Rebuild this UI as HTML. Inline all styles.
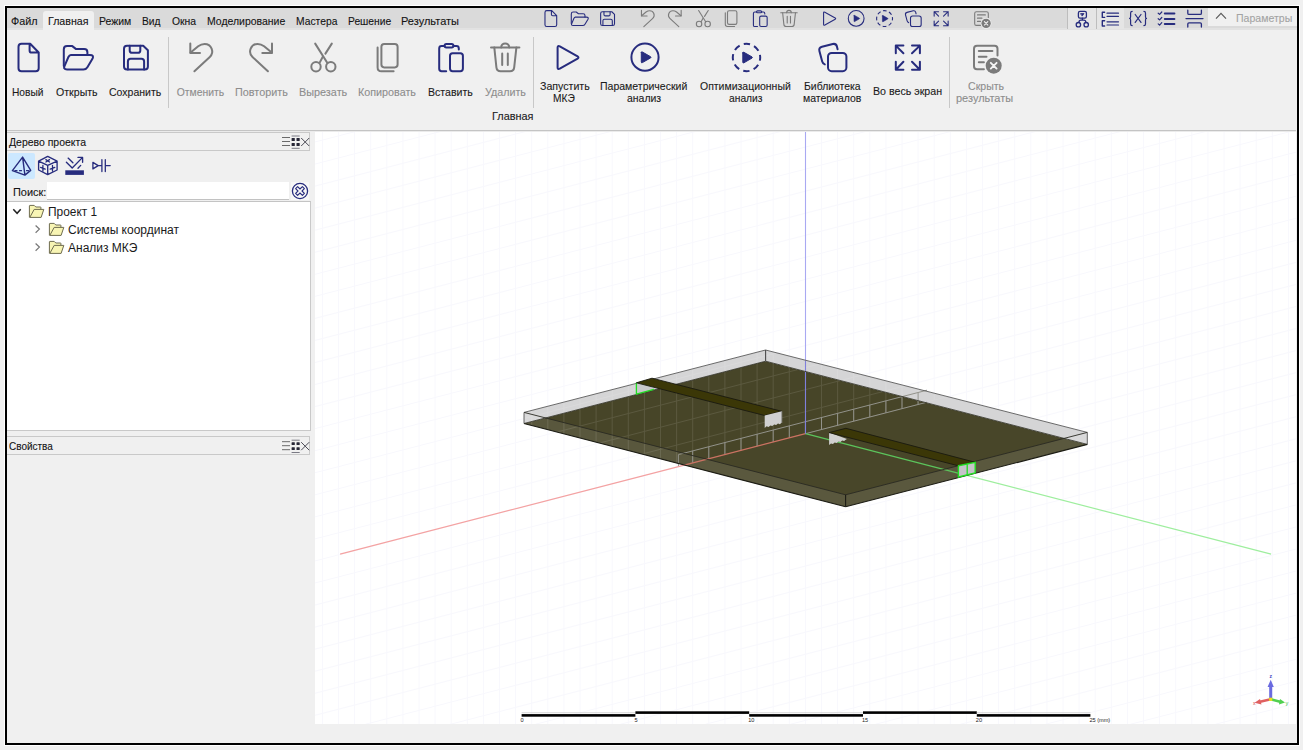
<!DOCTYPE html><html><head><meta charset="utf-8"><style>
*{margin:0;padding:0;box-sizing:border-box}
html,body{width:1303px;height:750px;overflow:hidden;background:#f0f0f0;font-family:"Liberation Sans",sans-serif}
.abs{position:absolute}
.t{position:absolute;white-space:pre;transform-origin:0 0;font-family:"Liberation Sans",sans-serif;-webkit-text-stroke:0.1px currentColor}
</style></head><body>
<div class="abs" style="left:4px;top:5px;width:1296px;height:741px;border:1px solid #fff"></div>
<div class="abs" style="left:7px;top:8px;width:1290px;height:21px;background:#dadada"></div>
<div class="abs" style="left:7px;top:28px;width:1290px;height:2px;background:#e2e2e2"></div>
<div class="abs" style="left:43px;top:11px;width:51px;height:19px;background:#f0f0f0;border-radius:3px 3px 0 0"></div>
<div class="abs" style="left:1068px;top:8px;width:56px;height:21px;background:#e5e5e5"></div>
<div class="abs" style="left:1067px;top:8px;width:1px;height:21px;background:#bdbdbd"></div>
<div class="abs" style="left:1096px;top:8px;width:1px;height:21px;background:#bdbdbd"></div>
<div class="abs" style="left:1208px;top:8px;width:89px;height:18px;background:#f0f0f0"></div>
<div class="abs" style="left:7px;top:30px;width:1290px;height:100px;background:#f0f0f0"></div>
<div class="abs" style="left:168px;top:37px;width:1px;height:71px;background:#c8c8c8"></div>
<div class="abs" style="left:533px;top:37px;width:1px;height:71px;background:#c8c8c8"></div>
<div class="abs" style="left:949px;top:37px;width:1px;height:71px;background:#c8c8c8"></div>
<div class="abs" style="left:7px;top:130px;width:1289px;height:1px;background:#c4c4c4"></div>
<div class="abs" style="left:7px;top:131px;width:1289px;height:1px;background:#ebebeb"></div>
<div class="abs" style="left:7px;top:132px;width:303px;height:19px;border:1px solid #c9c9c9;border-left:none;background:#f0f0f0"></div>
<div class="abs" style="left:8px;top:153px;width:27px;height:26px;background:#cce8ff;border-radius:2px"></div>
<div class="abs" style="left:47px;top:182px;width:242px;height:18px;background:#fff;border-bottom:1px solid #c2c2c2"></div>
<div class="abs" style="left:291px;top:182px;width:18px;height:18px;background:#f7f7f7"></div>
<div class="abs" style="left:7px;top:201px;width:304px;height:230px;background:#fff;border:1px solid #c9c9c9;border-left:none;border-top:1px solid #c4c4c4"></div>
<div class="abs" style="left:7px;top:436px;width:303px;height:19px;border:1px solid #c9c9c9;border-left:none;background:#f0f0f0"></div>
<svg class="abs" style="left:315px;top:132px" width="981" height="592" viewBox="315 132 981 592">
<rect x="315" y="132" width="981" height="592" fill="#fff"/>
<g stroke="#f8f8fd" stroke-width="1" fill="none" opacity="1"><line x1="322.40" y1="132" x2="322.40" y2="724"/><line x1="338.50" y1="132" x2="338.50" y2="724"/><line x1="354.60" y1="132" x2="354.60" y2="724"/><line x1="370.70" y1="132" x2="370.70" y2="724"/><line x1="386.80" y1="132" x2="386.80" y2="724"/><line x1="402.90" y1="132" x2="402.90" y2="724"/><line x1="419.00" y1="132" x2="419.00" y2="724"/><line x1="435.10" y1="132" x2="435.10" y2="724"/><line x1="451.20" y1="132" x2="451.20" y2="724"/><line x1="467.30" y1="132" x2="467.30" y2="724"/><line x1="483.40" y1="132" x2="483.40" y2="724"/><line x1="499.50" y1="132" x2="499.50" y2="724"/><line x1="515.60" y1="132" x2="515.60" y2="724"/><line x1="531.70" y1="132" x2="531.70" y2="724"/><line x1="547.80" y1="132" x2="547.80" y2="724"/><line x1="563.90" y1="132" x2="563.90" y2="724"/><line x1="580.00" y1="132" x2="580.00" y2="724"/><line x1="596.10" y1="132" x2="596.10" y2="724"/><line x1="612.20" y1="132" x2="612.20" y2="724"/><line x1="628.30" y1="132" x2="628.30" y2="724"/><line x1="644.40" y1="132" x2="644.40" y2="724"/><line x1="660.50" y1="132" x2="660.50" y2="724"/><line x1="676.60" y1="132" x2="676.60" y2="724"/><line x1="692.70" y1="132" x2="692.70" y2="724"/><line x1="708.80" y1="132" x2="708.80" y2="724"/><line x1="724.90" y1="132" x2="724.90" y2="724"/><line x1="741.00" y1="132" x2="741.00" y2="724"/><line x1="757.10" y1="132" x2="757.10" y2="724"/><line x1="773.20" y1="132" x2="773.20" y2="724"/><line x1="789.30" y1="132" x2="789.30" y2="724"/><line x1="805.40" y1="132" x2="805.40" y2="724"/><line x1="821.50" y1="132" x2="821.50" y2="724"/><line x1="837.60" y1="132" x2="837.60" y2="724"/><line x1="853.70" y1="132" x2="853.70" y2="724"/><line x1="869.80" y1="132" x2="869.80" y2="724"/><line x1="885.90" y1="132" x2="885.90" y2="724"/><line x1="902.00" y1="132" x2="902.00" y2="724"/><line x1="918.10" y1="132" x2="918.10" y2="724"/><line x1="934.20" y1="132" x2="934.20" y2="724"/><line x1="950.30" y1="132" x2="950.30" y2="724"/><line x1="966.40" y1="132" x2="966.40" y2="724"/><line x1="982.50" y1="132" x2="982.50" y2="724"/><line x1="998.60" y1="132" x2="998.60" y2="724"/><line x1="1014.70" y1="132" x2="1014.70" y2="724"/><line x1="1030.80" y1="132" x2="1030.80" y2="724"/><line x1="1046.90" y1="132" x2="1046.90" y2="724"/><line x1="1063.00" y1="132" x2="1063.00" y2="724"/><line x1="1079.10" y1="132" x2="1079.10" y2="724"/><line x1="1095.20" y1="132" x2="1095.20" y2="724"/><line x1="1111.30" y1="132" x2="1111.30" y2="724"/><line x1="1127.40" y1="132" x2="1127.40" y2="724"/><line x1="1143.50" y1="132" x2="1143.50" y2="724"/><line x1="1159.60" y1="132" x2="1159.60" y2="724"/><line x1="1175.70" y1="132" x2="1175.70" y2="724"/><line x1="1191.80" y1="132" x2="1191.80" y2="724"/><line x1="1207.90" y1="132" x2="1207.90" y2="724"/><line x1="1224.00" y1="132" x2="1224.00" y2="724"/><line x1="1240.10" y1="132" x2="1240.10" y2="724"/><line x1="1256.20" y1="132" x2="1256.20" y2="724"/><line x1="1272.30" y1="132" x2="1272.30" y2="724"/><line x1="1288.40" y1="132" x2="1288.40" y2="724"/><line x1="315" y1="142.00" x2="1296" y2="-112.47"/><line x1="315" y1="164.05" x2="1296" y2="-90.42"/><line x1="315" y1="186.10" x2="1296" y2="-68.37"/><line x1="315" y1="208.15" x2="1296" y2="-46.32"/><line x1="315" y1="230.20" x2="1296" y2="-24.27"/><line x1="315" y1="252.25" x2="1296" y2="-2.22"/><line x1="315" y1="274.30" x2="1296" y2="19.83"/><line x1="315" y1="296.35" x2="1296" y2="41.88"/><line x1="315" y1="318.40" x2="1296" y2="63.93"/><line x1="315" y1="340.45" x2="1296" y2="85.98"/><line x1="315" y1="362.50" x2="1296" y2="108.03"/><line x1="315" y1="384.55" x2="1296" y2="130.08"/><line x1="315" y1="406.60" x2="1296" y2="152.13"/><line x1="315" y1="428.65" x2="1296" y2="174.18"/><line x1="315" y1="450.70" x2="1296" y2="196.23"/><line x1="315" y1="472.75" x2="1296" y2="218.28"/><line x1="315" y1="494.80" x2="1296" y2="240.33"/><line x1="315" y1="516.85" x2="1296" y2="262.38"/><line x1="315" y1="538.90" x2="1296" y2="284.43"/><line x1="315" y1="560.95" x2="1296" y2="306.48"/><line x1="315" y1="583.00" x2="1296" y2="328.53"/><line x1="315" y1="605.05" x2="1296" y2="350.58"/><line x1="315" y1="627.10" x2="1296" y2="372.63"/><line x1="315" y1="649.15" x2="1296" y2="394.68"/><line x1="315" y1="671.20" x2="1296" y2="416.73"/><line x1="315" y1="693.25" x2="1296" y2="438.78"/><line x1="315" y1="715.30" x2="1296" y2="460.83"/><line x1="315" y1="737.35" x2="1296" y2="482.88"/><line x1="315" y1="759.40" x2="1296" y2="504.93"/><line x1="315" y1="781.45" x2="1296" y2="526.98"/><line x1="315" y1="803.50" x2="1296" y2="549.03"/><line x1="315" y1="825.55" x2="1296" y2="571.08"/><line x1="315" y1="847.60" x2="1296" y2="593.13"/><line x1="315" y1="869.65" x2="1296" y2="615.18"/><line x1="315" y1="891.70" x2="1296" y2="637.23"/><line x1="315" y1="913.75" x2="1296" y2="659.28"/><line x1="315" y1="935.80" x2="1296" y2="681.33"/><line x1="315" y1="957.85" x2="1296" y2="703.38"/></g>
<polygon points="524.0,423.5 765.6,361.2 1087.3,444.4 845.6,506.8" fill="#484629"/>
<polygon points="524.0,412.4 765.6,350.0 765.6,361.2 524.0,423.5" fill="#d5d5d6"/>
<polygon points="765.6,350.0 1087.3,432.4 1087.3,444.4 765.6,361.2" fill="#d5d5d6"/>
<defs><clipPath id="bk"><polygon points="315.0,560.7 1296.0,306.7 1296.0,132.0 315.0,132.0"/></clipPath></defs>
<defs><clipPath id="brd"><polygon points="524.0,412.4 765.6,350.0 1087.3,432.4 1087.3,444.4 845.6,506.8 524.0,423.5"/></clipPath></defs>
<g clip-path="url(#brd)"><g clip-path="url(#bk)"><g stroke="#ffffff" stroke-width="1" fill="none" opacity="0.1"><line x1="322.40" y1="132" x2="322.40" y2="724"/><line x1="338.50" y1="132" x2="338.50" y2="724"/><line x1="354.60" y1="132" x2="354.60" y2="724"/><line x1="370.70" y1="132" x2="370.70" y2="724"/><line x1="386.80" y1="132" x2="386.80" y2="724"/><line x1="402.90" y1="132" x2="402.90" y2="724"/><line x1="419.00" y1="132" x2="419.00" y2="724"/><line x1="435.10" y1="132" x2="435.10" y2="724"/><line x1="451.20" y1="132" x2="451.20" y2="724"/><line x1="467.30" y1="132" x2="467.30" y2="724"/><line x1="483.40" y1="132" x2="483.40" y2="724"/><line x1="499.50" y1="132" x2="499.50" y2="724"/><line x1="515.60" y1="132" x2="515.60" y2="724"/><line x1="531.70" y1="132" x2="531.70" y2="724"/><line x1="547.80" y1="132" x2="547.80" y2="724"/><line x1="563.90" y1="132" x2="563.90" y2="724"/><line x1="580.00" y1="132" x2="580.00" y2="724"/><line x1="596.10" y1="132" x2="596.10" y2="724"/><line x1="612.20" y1="132" x2="612.20" y2="724"/><line x1="628.30" y1="132" x2="628.30" y2="724"/><line x1="644.40" y1="132" x2="644.40" y2="724"/><line x1="660.50" y1="132" x2="660.50" y2="724"/><line x1="676.60" y1="132" x2="676.60" y2="724"/><line x1="692.70" y1="132" x2="692.70" y2="724"/><line x1="708.80" y1="132" x2="708.80" y2="724"/><line x1="724.90" y1="132" x2="724.90" y2="724"/><line x1="741.00" y1="132" x2="741.00" y2="724"/><line x1="757.10" y1="132" x2="757.10" y2="724"/><line x1="773.20" y1="132" x2="773.20" y2="724"/><line x1="789.30" y1="132" x2="789.30" y2="724"/><line x1="805.40" y1="132" x2="805.40" y2="724"/><line x1="821.50" y1="132" x2="821.50" y2="724"/><line x1="837.60" y1="132" x2="837.60" y2="724"/><line x1="853.70" y1="132" x2="853.70" y2="724"/><line x1="869.80" y1="132" x2="869.80" y2="724"/><line x1="885.90" y1="132" x2="885.90" y2="724"/><line x1="902.00" y1="132" x2="902.00" y2="724"/><line x1="918.10" y1="132" x2="918.10" y2="724"/><line x1="934.20" y1="132" x2="934.20" y2="724"/><line x1="950.30" y1="132" x2="950.30" y2="724"/><line x1="966.40" y1="132" x2="966.40" y2="724"/><line x1="982.50" y1="132" x2="982.50" y2="724"/><line x1="998.60" y1="132" x2="998.60" y2="724"/><line x1="1014.70" y1="132" x2="1014.70" y2="724"/><line x1="1030.80" y1="132" x2="1030.80" y2="724"/><line x1="1046.90" y1="132" x2="1046.90" y2="724"/><line x1="1063.00" y1="132" x2="1063.00" y2="724"/><line x1="1079.10" y1="132" x2="1079.10" y2="724"/><line x1="1095.20" y1="132" x2="1095.20" y2="724"/><line x1="1111.30" y1="132" x2="1111.30" y2="724"/><line x1="1127.40" y1="132" x2="1127.40" y2="724"/><line x1="1143.50" y1="132" x2="1143.50" y2="724"/><line x1="1159.60" y1="132" x2="1159.60" y2="724"/><line x1="1175.70" y1="132" x2="1175.70" y2="724"/><line x1="1191.80" y1="132" x2="1191.80" y2="724"/><line x1="1207.90" y1="132" x2="1207.90" y2="724"/><line x1="1224.00" y1="132" x2="1224.00" y2="724"/><line x1="1240.10" y1="132" x2="1240.10" y2="724"/><line x1="1256.20" y1="132" x2="1256.20" y2="724"/><line x1="1272.30" y1="132" x2="1272.30" y2="724"/><line x1="1288.40" y1="132" x2="1288.40" y2="724"/><line x1="315" y1="142.00" x2="1296" y2="-112.47"/><line x1="315" y1="164.05" x2="1296" y2="-90.42"/><line x1="315" y1="186.10" x2="1296" y2="-68.37"/><line x1="315" y1="208.15" x2="1296" y2="-46.32"/><line x1="315" y1="230.20" x2="1296" y2="-24.27"/><line x1="315" y1="252.25" x2="1296" y2="-2.22"/><line x1="315" y1="274.30" x2="1296" y2="19.83"/><line x1="315" y1="296.35" x2="1296" y2="41.88"/><line x1="315" y1="318.40" x2="1296" y2="63.93"/><line x1="315" y1="340.45" x2="1296" y2="85.98"/><line x1="315" y1="362.50" x2="1296" y2="108.03"/><line x1="315" y1="384.55" x2="1296" y2="130.08"/><line x1="315" y1="406.60" x2="1296" y2="152.13"/><line x1="315" y1="428.65" x2="1296" y2="174.18"/><line x1="315" y1="450.70" x2="1296" y2="196.23"/><line x1="315" y1="472.75" x2="1296" y2="218.28"/><line x1="315" y1="494.80" x2="1296" y2="240.33"/><line x1="315" y1="516.85" x2="1296" y2="262.38"/><line x1="315" y1="538.90" x2="1296" y2="284.43"/><line x1="315" y1="560.95" x2="1296" y2="306.48"/><line x1="315" y1="583.00" x2="1296" y2="328.53"/><line x1="315" y1="605.05" x2="1296" y2="350.58"/><line x1="315" y1="627.10" x2="1296" y2="372.63"/><line x1="315" y1="649.15" x2="1296" y2="394.68"/><line x1="315" y1="671.20" x2="1296" y2="416.73"/><line x1="315" y1="693.25" x2="1296" y2="438.78"/><line x1="315" y1="715.30" x2="1296" y2="460.83"/><line x1="315" y1="737.35" x2="1296" y2="482.88"/><line x1="315" y1="759.40" x2="1296" y2="504.93"/><line x1="315" y1="781.45" x2="1296" y2="526.98"/><line x1="315" y1="803.50" x2="1296" y2="549.03"/><line x1="315" y1="825.55" x2="1296" y2="571.08"/><line x1="315" y1="847.60" x2="1296" y2="593.13"/><line x1="315" y1="869.65" x2="1296" y2="615.18"/><line x1="315" y1="891.70" x2="1296" y2="637.23"/><line x1="315" y1="913.75" x2="1296" y2="659.28"/><line x1="315" y1="935.80" x2="1296" y2="681.33"/><line x1="315" y1="957.85" x2="1296" y2="703.38"/></g></g></g>
<polygon points="524.0,412.4 845.6,494.8 845.6,506.8 524.0,423.5" fill="#ffffff" fill-opacity="0.1"/>
<polygon points="845.6,494.8 1087.3,432.4 1087.3,444.4 845.6,506.8" fill="#ffffff" fill-opacity="0.1"/>
<g stroke="#92928a" stroke-width="1" fill="none"><line x1="678.4" y1="454.6" x2="927" y2="390.2"/><line x1="692.7" y1="450.9" x2="692.7" y2="462.9"/><line x1="708.8" y1="446.7" x2="708.8" y2="458.7"/><line x1="724.9" y1="442.6" x2="724.9" y2="454.6"/><line x1="741.0" y1="438.4" x2="741.0" y2="450.4"/><line x1="757.1" y1="434.2" x2="757.1" y2="446.2"/><line x1="773.2" y1="430.1" x2="773.2" y2="442.1"/><line x1="789.3" y1="425.9" x2="789.3" y2="437.9"/><line x1="805.4" y1="421.7" x2="805.4" y2="433.7"/><line x1="821.5" y1="417.6" x2="821.5" y2="429.6"/><line x1="837.6" y1="413.4" x2="837.6" y2="425.4"/><line x1="853.7" y1="409.2" x2="853.7" y2="421.2"/><line x1="869.8" y1="405.1" x2="869.8" y2="417.1"/><line x1="885.9" y1="400.9" x2="885.9" y2="412.9"/><line x1="902.0" y1="396.7" x2="902.0" y2="408.7"/><line x1="918.1" y1="392.5" x2="918.1" y2="404.5"/><line x1="678.4" y1="454.6" x2="678.4" y2="466.6"/><line x1="805.5" y1="433.7" x2="927" y2="402.2"/></g>
<line x1="805.5" y1="433.7" x2="684.3" y2="465.08" stroke="#cc7262" stroke-width="1.2"/>
<line x1="684.3" y1="465.08" x2="340.1" y2="554.2" stroke="#f4a2a2" stroke-width="1.2"/>
<line x1="805.5" y1="433.7" x2="966.7" y2="475.43" stroke="#5cc45c" stroke-width="1.2"/>
<line x1="966.7" y1="475.43" x2="1271.1" y2="554.2" stroke="#9eee9e" stroke-width="1.2"/>
<line x1="805.5" y1="132" x2="805.5" y2="360.5" stroke="#a9a9f2" stroke-width="1.1"/>
<line x1="805.5" y1="360.5" x2="805.5" y2="433.7" stroke="#7f7fdc" stroke-width="1.1"/>
<line x1="524" y1="412.4" x2="765.6" y2="350" stroke="#5a5a5a" stroke-width="0.9"/><line x1="765.6" y1="350" x2="1087.3" y2="432.4" stroke="#5a5a5a" stroke-width="0.9"/><line x1="524" y1="423.5" x2="765.6" y2="361.2" stroke="#3a3a30" stroke-width="0.9"/><line x1="765.6" y1="361.2" x2="1087.3" y2="444.4" stroke="#3a3a30" stroke-width="0.9"/><line x1="524" y1="412.4" x2="845.6" y2="494.8" stroke="#2a2a22" stroke-width="0.9"/><line x1="845.6" y1="494.8" x2="1087.3" y2="432.4" stroke="#2a2a22" stroke-width="0.9"/><line x1="524" y1="423.5" x2="845.6" y2="506.8" stroke="#1c1c14" stroke-width="1.1"/><line x1="845.6" y1="506.8" x2="1087.3" y2="444.4" stroke="#1c1c14" stroke-width="1.1"/>
<line x1="524" y1="412.4" x2="524" y2="423.5" stroke="#555" stroke-width="0.9"/><line x1="1087.3" y1="432.4" x2="1087.3" y2="444.4" stroke="#555" stroke-width="0.9"/><line x1="845.6" y1="494.8" x2="845.6" y2="506.8" stroke="#1c1c14" stroke-width="1.1"/><line x1="765.6" y1="350" x2="765.6" y2="361.2" stroke="#4a4a4a" stroke-width="1.1"/>
<polygon points="636.4,382.8 652.0,378.2 653.9,389.6 636.4,394.2" fill="#c9c9cb" stroke="none"/>
<polyline points="636.4,382.8 636.4,394.2 653.9,389.4" fill="none" stroke="#22dd22" stroke-width="1.3"/>
<polygon points="636.4,382.8 652.0,378.2 781.8,411.3 764.7,415.5" fill="#3b3707" stroke="#1a1a10" stroke-width="0.9"/>
<polygon points="764.7,415.5 781.8,411.3 781.8,422.6 779.9,424.2 778.0,423.5 776.1,425.1 774.2,424.5 772.3,426.0 770.4,425.4 768.5,427.0 766.6,426.3 764.7,427.9" fill="#d0d0d0" stroke="none"/>
<line x1="781.8" y1="411.3" x2="781.8" y2="423" stroke="#8a8a8a" stroke-width="0.8"/>
<polygon points="829.1,432.6 847.0,439.0 846.0,439.5 844.1,441.1 842.2,440.5 840.4,442.1 838.5,441.5 836.6,443.1 834.7,442.5 832.9,444.1 831.0,443.5 829.1,445.1" fill="#d0d0d0" stroke="none"/>
<polygon points="829.1,432.6 845.9,428.3 975.2,462.3 958.4,465.8" fill="#3b3707" stroke="#1a1a10" stroke-width="0.9"/>
<polygon points="958.4,465.8 975.2,462.3 975.2,473.0 958.4,477.0" fill="#c6c3ca" stroke="#22dd22" stroke-width="1.4"/>
<line x1="967.2" y1="464.2" x2="967.2" y2="475" stroke="#22dd22" stroke-width="1.3"/>
<rect x="521.6" y="714.1" width="113.79999999999995" height="2.6" fill="#000"/>
<rect x="521.6" y="712.4" width="113.79999999999995" height="0.8" fill="#ccc"/>
<rect x="635.4" y="711.3000000000001" width="113.80000000000007" height="2.6" fill="#000"/>
<rect x="749.2" y="714.1" width="113.79999999999995" height="2.6" fill="#000"/>
<rect x="749.2" y="712.4" width="113.79999999999995" height="0.8" fill="#ccc"/>
<rect x="863.0" y="711.3000000000001" width="113.79999999999995" height="2.6" fill="#000"/>
<rect x="976.8" y="714.1" width="113.60000000000014" height="2.6" fill="#000"/>
<rect x="976.8" y="712.4" width="113.60000000000014" height="0.8" fill="#ccc"/>
<text x="520.6" y="722" font-family="Liberation Sans" font-size="5.6" fill="#222">0</text>
<text x="634.4" y="722" font-family="Liberation Sans" font-size="5.6" fill="#222">5</text>
<text x="748.2" y="722" font-family="Liberation Sans" font-size="5.6" fill="#222">10</text>
<text x="862.0" y="722" font-family="Liberation Sans" font-size="5.6" fill="#222">15</text>
<text x="975.8" y="722" font-family="Liberation Sans" font-size="5.6" fill="#222">20</text>
<text x="1089.4" y="722" font-family="Liberation Sans" font-size="5.6" fill="#222">25 (mm)</text>
<line x1="1270.7" y1="699.3" x2="1270.7" y2="686" stroke="#6a6ae0" stroke-width="3"/>
<polygon points="1267.6,687.0 1273.8,687.0 1270.7,679.8" fill="#6a6ae0"/>
<line x1="1270.7" y1="699.3" x2="1259" y2="702" stroke="#e06060" stroke-width="2.6"/>
<polygon points="1260.0,699.0 1261.5,704.5 1254.6,702.8" fill="#e06060"/>
<line x1="1270.7" y1="699.3" x2="1281" y2="702" stroke="#50d050" stroke-width="2.6"/>
<polygon points="1280.0,699.0 1279.0,704.5 1285.0,702.6" fill="#50d050"/>
<rect x="1269.1000000000001" y="697.6999999999999" width="3.2" height="3.2" fill="#e8e020"/>
<text x="1269.6" y="678.4" font-family="Liberation Sans" font-size="5" font-weight="bold" fill="#4040c0">z</text>
<text x="1285.6" y="704.8" font-family="Liberation Sans" font-size="5.5" fill="#40c040">y</text>
<text x="1253" y="704.5" font-family="Liberation Sans" font-size="5" fill="#d04040">x</text>
</svg>
<div class="abs" style="left:5px;top:6px;width:1294px;height:739px;border:2px solid #000"></div>
<svg class="abs" style="left:0;top:0" width="1303" height="750" viewBox="0 0 1303 750">
<g fill="none" stroke="#272c7e" stroke-width="2" stroke-linecap="round" stroke-linejoin="round"><path d="M29.6 43.8H21.5Q18.5 43.8 18.5 46.8V68.2Q18.5 71.2 21.5 71.2H35.7Q38.7 71.2 38.7 68.2V52.5L30.2 43.8M29.6 43.8V50.4Q29.6 52.6 31.8 52.6H38.7"/></g>
<g fill="none" stroke="#272c7e" stroke-width="2" stroke-linecap="round" stroke-linejoin="round"><path d="M63.8 66V49.4Q63.8 46.1 67.1 46.1H72.3L76.1 49.1H84.2Q87.4 49.1 87.4 52.3V54.9"/><path d="M70.8 54.9H90Q94.2 54.9 92.6 58.6L87.4 67.2Q86.2 69.4 83.4 69.4H67Q63 69.4 64.6 65.8L68.4 57Q69.4 54.9 70.8 54.9Z"/></g>
<g fill="none" stroke="#272c7e" stroke-width="2" stroke-linecap="round" stroke-linejoin="round"><path d="M127 45.7H143.2L147.9 50.2V66.4Q147.9 69.4 144.9 69.4H127Q124 69.4 124 66.4V48.7Q124 45.7 127 45.7Z"/><path d="M129.7 45.7V50.4Q129.7 52.8 132.1 52.8H137.9Q140.3 52.8 140.3 50.4V45.7"/><path d="M127.9 69.4V61.4Q127.9 58.7 130.6 58.7H141.4Q144.1 58.7 144.1 61.4V69.4"/></g>
<g fill="none" stroke="#7b7b7b" stroke-width="2" stroke-linecap="round" stroke-linejoin="round"><path d="M190.3 43.4V52.9H200"/><path d="M190.6 52.6L198.2 46.2Q201.2 43.9 204.6 43.9A7.6 7.6 0 0 1 209.8 57L194.4 71.3"/></g>
<g fill="none" stroke="#7b7b7b" stroke-width="2" stroke-linecap="round" stroke-linejoin="round"><g transform="translate(462.3,0) scale(-1,1)"><path d="M190.3 43.4V52.9H200"/><path d="M190.6 52.6L198.2 46.2Q201.2 43.9 204.6 43.9A7.6 7.6 0 0 1 209.8 57L194.4 71.3"/></g></g>
<g fill="none" stroke="#7b7b7b" stroke-width="2" stroke-linecap="round" stroke-linejoin="round"><path d="M315.2 43.6L327.4 63"/><path d="M331.8 43.6L325.4 53.6M322.8 56.8L319.8 62.4"/><circle cx="316" cy="66.8" r="4.7"/><circle cx="330.8" cy="66.8" r="4.7"/></g>
<g fill="none" stroke="#7b7b7b" stroke-width="2" stroke-linecap="round" stroke-linejoin="round"><rect x="381.4" y="44" width="16.2" height="23.4" rx="2.8"/><path d="M377.6 47.6V67.4Q377.6 71.2 381.4 71.2H393.6"/></g>
<g fill="none" stroke="#272c7e" stroke-width="2" stroke-linecap="round" stroke-linejoin="round"><path d="M444.4 46.1H441.6Q439.2 46.1 439.2 48.5V68.8Q439.2 71.2 441.6 71.2H446.2"/><path d="M453.5 46.1H456.4Q458.8 46.1 458.8 48.5V49.6"/><rect x="444.6" y="44.1" width="8.8" height="3.4" rx="1.7"/><rect x="450" y="53.2" width="12.9" height="18" rx="2.6"/></g>
<g fill="none" stroke="#7b7b7b" stroke-width="2" stroke-linecap="round" stroke-linejoin="round"><path d="M491 47.4H519.4"/><path d="M501.2 47.4A4 4 0 0 1 509.2 47.4"/><path d="M494.3 47.4L496.4 67.4Q496.8 71.2 500.6 71.2H510Q513.8 71.2 514.2 67.4L516.4 47.4"/><path d="M502.2 53.5V65.1M507.8 53.5V65.1"/></g>
<g fill="none" stroke="#272c7e" stroke-width="2" stroke-linecap="round" stroke-linejoin="round"><path d="M557.6 47.6V67.4Q557.6 69.8 559.8 68.7L577.6 58.6Q579.3 57.5 577.6 56.4L559.8 46.4Q557.6 45.2 557.6 47.6Z"/></g>
<g fill="none" stroke="#272c7e" stroke-width="2" stroke-linecap="round" stroke-linejoin="round"><circle cx="645" cy="57.2" r="13.6"/><path d="M641.3 52.5V62Q641.3 63.2 642.4 62.6L650.6 57.9Q651.4 57.3 650.6 56.7L642.4 52Q641.3 51.3 641.3 52.5Z" fill="#272c7e" stroke-width="1"/></g>
<g fill="none" stroke="#272c7e" stroke-width="2" stroke-linecap="round" stroke-linejoin="round"><circle cx="746.5" cy="57.5" r="13.7" stroke-dasharray="6.4 4.36" stroke-dashoffset="-18.3" stroke-linecap="butt" transform="rotate(0 746.5 57.5)"/><path d="M742.8 52.9V62.2Q742.8 63.4 743.9 62.8L752 58.1Q752.8 57.5 752 56.9L743.9 52.3Q742.8 51.7 742.8 52.9Z" fill="#272c7e" stroke-width="1"/></g>
<g fill="none" stroke="#272c7e" stroke-width="2" stroke-linecap="round" stroke-linejoin="round"><rect x="828" y="52.9" width="18.4" height="18.3" rx="3.6"/><path d="M837.6 49.2L836.9 46.4Q836 43.3 832.8 44L822 46.8Q818.6 47.7 819.4 51L822.2 61.6Q822.8 63.8 824.8 64.4"/></g>
<g fill="none" stroke="#272c7e" stroke-width="2" stroke-linecap="round" stroke-linejoin="round"><path d="M903.4 45.6H895.8V53.2M895.8 45.6L903.4 53.2"/><path d="M912 45.6H919.9V53.2M919.9 45.6L912 53.2"/><path d="M895.8 61.8V69.7H903.4M895.8 69.7L903.4 61.8"/><path d="M919.9 61.8V69.7H912M919.9 69.7L912 61.8"/></g>
<g fill="none" stroke="#7b7b7b" stroke-width="2" stroke-linecap="round" stroke-linejoin="round"><path d="M997.5 55.6V48.7Q997.5 45.7 994.5 45.7H977Q974 45.7 974 48.7V66.2Q974 69.2 977 69.2H983.9"/><path d="M978.8 51.1H992.4M978.8 56.7H986.5M978.8 62.3H983.9"/><circle cx="993.7" cy="65.7" r="9.2" fill="#f0f0f0" stroke="none"/><circle cx="993.7" cy="65.7" r="8" fill="#7b7b7b" stroke="none"/><path d="M990.8 62.8L996.6 68.6M996.6 62.8L990.8 68.6" stroke="#f4f4f4" stroke-width="1.9"/></g>
<g transform="translate(534.25,-14.75) scale(0.58)" fill="none" stroke="#272c7e" stroke-width="1.9" stroke-linecap="round" stroke-linejoin="round"><path d="M29.6 43.8H21.5Q18.5 43.8 18.5 46.8V68.2Q18.5 71.2 21.5 71.2H35.7Q38.7 71.2 38.7 68.2V52.5L30.2 43.8M29.6 43.8V50.4Q29.6 52.6 31.8 52.6H38.7"/></g>
<g transform="translate(534.29,-14.75) scale(0.58)" fill="none" stroke="#272c7e" stroke-width="1.9" stroke-linecap="round" stroke-linejoin="round"><path d="M63.8 66V49.4Q63.8 46.1 67.1 46.1H72.3L76.1 49.1H84.2Q87.4 49.1 87.4 52.3V54.9"/><path d="M70.8 54.9H90Q94.2 54.9 92.6 58.6L87.4 67.2Q86.2 69.4 83.4 69.4H67Q63 69.4 64.6 65.8L68.4 57Q69.4 54.9 70.8 54.9Z"/></g>
<g transform="translate(528.73,-14.75) scale(0.58)" fill="none" stroke="#272c7e" stroke-width="1.9" stroke-linecap="round" stroke-linejoin="round"><path d="M127 45.7H143.2L147.9 50.2V66.4Q147.9 69.4 144.9 69.4H127Q124 69.4 124 66.4V48.7Q124 45.7 127 45.7Z"/><path d="M129.7 45.7V50.4Q129.7 52.8 132.1 52.8H137.9Q140.3 52.8 140.3 50.4V45.7"/><path d="M127.9 69.4V61.4Q127.9 58.7 130.6 58.7H141.4Q144.1 58.7 144.1 61.4V69.4"/></g>
<g transform="translate(531.08,-14.75) scale(0.58)" fill="none" stroke="#7b7b7b" stroke-width="1.9" stroke-linecap="round" stroke-linejoin="round"><path d="M190.3 43.4V52.9H200"/><path d="M190.6 52.6L198.2 46.2Q201.2 43.9 204.6 43.9A7.6 7.6 0 0 1 209.8 57L194.4 71.3"/></g>
<g transform="translate(523.41,-14.75) scale(0.58)" fill="none" stroke="#7b7b7b" stroke-width="1.9" stroke-linecap="round" stroke-linejoin="round"><g transform="translate(462.3,0) scale(-1,1)"><path d="M190.3 43.4V52.9H200"/><path d="M190.6 52.6L198.2 46.2Q201.2 43.9 204.6 43.9A7.6 7.6 0 0 1 209.8 57L194.4 71.3"/></g></g>
<g transform="translate(515.79,-14.75) scale(0.58)" fill="none" stroke="#7b7b7b" stroke-width="1.9" stroke-linecap="round" stroke-linejoin="round"><path d="M315.2 43.6L327.4 63"/><path d="M331.8 43.6L325.4 53.6M322.8 56.8L319.8 62.4"/><circle cx="316" cy="66.8" r="4.7"/><circle cx="330.8" cy="66.8" r="4.7"/></g>
<g transform="translate(506.29,-14.75) scale(0.58)" fill="none" stroke="#7b7b7b" stroke-width="1.9" stroke-linecap="round" stroke-linejoin="round"><rect x="381.4" y="44" width="16.2" height="23.4" rx="2.8"/><path d="M377.6 47.6V67.4Q377.6 71.2 381.4 71.2H393.6"/></g>
<g transform="translate(498.68,-14.75) scale(0.58)" fill="none" stroke="#272c7e" stroke-width="1.9" stroke-linecap="round" stroke-linejoin="round"><path d="M444.4 46.1H441.6Q439.2 46.1 439.2 48.5V68.8Q439.2 71.2 441.6 71.2H446.2"/><path d="M453.5 46.1H456.4Q458.8 46.1 458.8 48.5V49.6"/><rect x="444.6" y="44.1" width="8.8" height="3.4" rx="1.7"/><rect x="450" y="53.2" width="12.9" height="18" rx="2.6"/></g>
<g transform="translate(495.95,-14.75) scale(0.58)" fill="none" stroke="#7b7b7b" stroke-width="1.9" stroke-linecap="round" stroke-linejoin="round"><path d="M491 47.4H519.4"/><path d="M501.2 47.4A4 4 0 0 1 509.2 47.4"/><path d="M494.3 47.4L496.4 67.4Q496.8 71.2 500.6 71.2H510Q513.8 71.2 514.2 67.4L516.4 47.4"/><path d="M502.2 53.5V65.1M507.8 53.5V65.1"/></g>
<g transform="translate(500.18,-14.75) scale(0.58)" fill="none" stroke="#272c7e" stroke-width="1.9" stroke-linecap="round" stroke-linejoin="round"><path d="M557.6 47.6V67.4Q557.6 69.8 559.8 68.7L577.6 58.6Q579.3 57.5 577.6 56.4L559.8 46.4Q557.6 45.2 557.6 47.6Z"/></g>
<g transform="translate(482.07,-14.75) scale(0.58)" fill="none" stroke="#272c7e" stroke-width="1.9" stroke-linecap="round" stroke-linejoin="round"><circle cx="645" cy="57.2" r="13.6"/><path d="M641.3 52.5V62Q641.3 63.2 642.4 62.6L650.6 57.9Q651.4 57.3 650.6 56.7L642.4 52Q641.3 51.3 641.3 52.5Z" fill="#272c7e" stroke-width="1"/></g>
<g transform="translate(451.60,-14.75) scale(0.58)" fill="none" stroke="#272c7e" stroke-width="1.9" stroke-linecap="round" stroke-linejoin="round"><circle cx="746.5" cy="57.5" r="13.7" stroke-dasharray="6.4 4.36" stroke-dashoffset="-18.3" stroke-linecap="butt" transform="rotate(0 746.5 57.5)"/><path d="M742.8 52.9V62.2Q742.8 63.4 743.9 62.8L752 58.1Q752.8 57.5 752 56.9L743.9 52.3Q742.8 51.7 742.8 52.9Z" fill="#272c7e" stroke-width="1"/></g>
<g transform="translate(430.26,-14.75) scale(0.58)" fill="none" stroke="#272c7e" stroke-width="1.9" stroke-linecap="round" stroke-linejoin="round"><rect x="828" y="52.9" width="18.4" height="18.3" rx="3.6"/><path d="M837.6 49.2L836.9 46.4Q836 43.3 832.8 44L822 46.8Q818.6 47.7 819.4 51L822.2 61.6Q822.8 63.8 824.8 64.4"/></g>
<g transform="translate(414.60,-14.75) scale(0.58)" fill="none" stroke="#272c7e" stroke-width="1.9" stroke-linecap="round" stroke-linejoin="round"><path d="M903.4 45.6H895.8V53.2M895.8 45.6L903.4 53.2"/><path d="M912 45.6H919.9V53.2M919.9 45.6L912 53.2"/><path d="M895.8 61.8V69.7H903.4M895.8 69.7L903.4 61.8"/><path d="M919.9 61.8V69.7H912M919.9 69.7L912 61.8"/></g>
<g transform="translate(409.77,-14.75) scale(0.58)" fill="none" stroke="#7b7b7b" stroke-width="1.9" stroke-linecap="round" stroke-linejoin="round"><path d="M997.5 55.6V48.7Q997.5 45.7 994.5 45.7H977Q974 45.7 974 48.7V66.2Q974 69.2 977 69.2H983.9"/><path d="M978.8 51.1H992.4M978.8 56.7H986.5M978.8 62.3H983.9"/><circle cx="993.7" cy="65.7" r="9.2" fill="#f0f0f0" stroke="none"/><circle cx="993.7" cy="65.7" r="8" fill="#7b7b7b" stroke="none"/><path d="M990.8 62.8L996.6 68.6M996.6 62.8L990.8 68.6" stroke="#f4f4f4" stroke-width="1.9"/></g>
<g fill="none" stroke="#272c7e" stroke-width="1.5" stroke-linejoin="round" stroke-linecap="round">
<path d="M22.6 157.1L12.4 170.6L24.9 175.1L30.7 170.4Z M22.6 157.1L24.9 175.1" stroke-width="1.4"/>
<path d="M15 170.7H17 M19.5 170.7H21.5 M26.5 170.7H28.5" stroke-width="1.2"/>
<path d="M47.7 156.4L38.6 161.2V170L47.7 174.6L57.1 170V161.2Z M38.6 161.2L47.7 165.4L57.1 161.2 M47.7 165.4V174.6" stroke-width="1.35"/>
<path d="M45.9 159.6L49.5 162M49.5 159.6L45.9 162 M42.9 165.4V171.2M40.6 167.4L45.2 169.2 M52.5 165.4V171.2M50.2 169.2L54.8 167.4" stroke-width="1.3"/>
<rect x="65.3" y="170.3" width="18.6" height="4.6" fill="#272c7e" stroke="none"/>
<path d="M66.4 162.2L72.2 168L82.6 157.4 M78 157.4H82.6V162.2 M68.1 158.1L72.9 162.7 M78 168.2L80.7 165.4" stroke-width="1.35"/>
<path d="M92.9 162.4V168.9L98.2 165.6Z M98.2 165.6H101.9 M105.3 165.6H110.2 M101.9 159.7V171.6 M105.3 159.7V171.6" stroke-width="1.3"/>
<circle cx="300" cy="191" r="7.6" stroke-width="1.3"/>
<path d="M297.6 186.6L300 189L302.4 186.6L304.4 188.6L302 191L304.4 193.4L302.4 195.4L300 193L297.6 195.4L295.6 193.4L298 191L295.6 188.6Z" stroke-width="1.1"/>
</g>
<path d="M13.3 209.2L17.1 213.3L20.7 209.2" fill="none" stroke="#222" stroke-width="1.5"/>
<g transform="translate(0,0)" stroke="#6e6c50" stroke-width="1" fill="#f8f5b4" stroke-linejoin="round"><path d="M29.4 217.4V205.8Q29.4 205.4 29.8 205.4H34.2L35.8 207H40.5Q40.9 207 40.9 207.4V209.4"/><path d="M34.2 209.4H43.8L41.1 217.4H29.8Z"/></g><g transform="translate(20,18)" stroke="#6e6c50" stroke-width="1" fill="#f8f5b4" stroke-linejoin="round"><path d="M29.4 217.4V205.8Q29.4 205.4 29.8 205.4H34.2L35.8 207H40.5Q40.9 207 40.9 207.4V209.4"/><path d="M34.2 209.4H43.8L41.1 217.4H29.8Z"/></g><g transform="translate(20,36)" stroke="#6e6c50" stroke-width="1" fill="#f8f5b4" stroke-linejoin="round"><path d="M29.4 217.4V205.8Q29.4 205.4 29.8 205.4H34.2L35.8 207H40.5Q40.9 207 40.9 207.4V209.4"/><path d="M34.2 209.4H43.8L41.1 217.4H29.8Z"/></g>
<path d="M35.6 225.5L39.4 229.1L35.6 232.7 M35.6 243.5L39.4 247.1L35.6 250.7" fill="none" stroke="#777" stroke-width="1.2"/>
<g transform="translate(0,0.0)">
<path d="M282 137.5H290 M282 141.5H290 M282 145.5H290" stroke="#6a6a6a" stroke-width="1"/>
<path d="M291.6 136H299.7 M291.6 148.3H299.7" stroke="#7a7a84" stroke-width="1"/>
<rect x="291.6" y="138.1" width="3.2" height="2.8" rx="0.5" fill="#262636"/><rect x="296.5" y="138.1" width="3.2" height="2.8" rx="0.5" fill="#262636"/><rect x="291.6" y="143.1" width="3.2" height="2.8" rx="0.5" fill="#262636"/><rect x="296.5" y="143.1" width="3.2" height="2.8" rx="0.5" fill="#262636"/>
<path d="M301.2 138L309.2 146 M309.2 138L301.2 146" stroke="#4a4a55" stroke-width="1"/>
</g>
<g transform="translate(0,304.2)">
<path d="M282 137.5H290 M282 141.5H290 M282 145.5H290" stroke="#6a6a6a" stroke-width="1"/>
<path d="M291.6 136H299.7 M291.6 148.3H299.7" stroke="#7a7a84" stroke-width="1"/>
<rect x="291.6" y="138.1" width="3.2" height="2.8" rx="0.5" fill="#262636"/><rect x="296.5" y="138.1" width="3.2" height="2.8" rx="0.5" fill="#262636"/><rect x="291.6" y="143.1" width="3.2" height="2.8" rx="0.5" fill="#262636"/><rect x="296.5" y="143.1" width="3.2" height="2.8" rx="0.5" fill="#262636"/>
<path d="M301.2 138L309.2 146 M309.2 138L301.2 146" stroke="#4a4a55" stroke-width="1"/>
</g>
<g fill="none" stroke="#272c7e" stroke-width="1.3" stroke-linecap="round" stroke-linejoin="round">
<rect x="1078.4" y="11.4" width="8" height="6.8" rx="1.6"/>
<path d="M1080.8 13.6H1084L1082.4 15.8Z" fill="#272c7e" stroke-width="0.8"/>
<path d="M1082.4 18.2V20.2M1079 22.2Q1079 20.2 1081 20.2H1083.8Q1085.8 20.2 1085.8 22.2"/>
<circle cx="1078.4" cy="24.7" r="2.2"/><circle cx="1086.2" cy="24.7" r="2.2"/>
<path d="M1104.6 12.3H1102.3V17.4H1104.6 M1104.6 20.7H1102.3V26H1104.6" stroke-width="1.4"/>
<path d="M1107 13.2H1118.5M1107 16.3H1118.5M1107 21.8H1118.5M1107 25H1118.5" stroke-width="1.2"/>
<path d="M1132.2 11.3Q1130.6 11.3 1130.6 13V16.8Q1130.6 18.4 1129.6 18.4Q1130.6 18.4 1130.6 20V23.9Q1130.6 25.6 1132.2 25.6 M1143.9 11.3Q1145.5 11.3 1145.5 13V16.8Q1145.5 18.4 1146.5 18.4Q1145.5 18.4 1145.5 20V23.9Q1145.5 25.6 1143.9 25.6" stroke-width="1.2"/>
<path d="M1135.2 14.5L1141 22.4M1141 14.5L1135.2 22.4" stroke-width="1.2"/>
<path d="M1158.2 13.2L1159.6 14.4L1161.8 12 M1158.2 18.7L1159.6 19.9L1161.8 17.5 M1158.2 23.9L1159.6 25.1L1161.8 22.7" stroke-width="1.2"/>
<path d="M1164.8 13.4H1174.4M1164.8 18.9H1174.4M1164.8 24.1H1174.4" stroke-width="2"/>
<path d="M1187.8 10.2V13.2Q1187.8 14.4 1189 14.4H1200.2Q1201.4 14.4 1201.4 13.2V10.2 M1186 18.6H1203 M1187.8 27V24Q1187.8 22.8 1189 22.8H1200.2Q1201.4 22.8 1201.4 24V27" stroke-width="1.3"/>
</g>
<path d="M1216 18.6L1221 13.4L1226 18.6" fill="none" stroke="#5a5a5a" stroke-width="1.2"/>
</svg>
<div class="t" style="left:11.00px;top:16px;font-size:10.8px;line-height:10.8px;color:#141414;transform:scaleX(1.000)">Файл</div>
<div class="t" style="left:48.02px;top:16px;font-size:10.8px;line-height:10.8px;color:#141414;transform:scaleX(0.985)">Главная</div>
<div class="t" style="left:99.03px;top:16px;font-size:10.8px;line-height:10.8px;color:#141414;transform:scaleX(0.969)">Режим</div>
<div class="t" style="left:142.05px;top:16px;font-size:10.8px;line-height:10.8px;color:#141414;transform:scaleX(0.947)">Вид</div>
<div class="t" style="left:172.00px;top:16px;font-size:10.8px;line-height:10.8px;color:#141414;transform:scaleX(0.960)">Окна</div>
<div class="t" style="left:207.03px;top:16px;font-size:10.8px;line-height:10.8px;color:#141414;transform:scaleX(0.969)">Моделирование</div>
<div class="t" style="left:295.85px;top:16px;font-size:10.8px;line-height:10.8px;color:#141414;transform:scaleX(0.955)">Мастера</div>
<div class="t" style="left:348.25px;top:16px;font-size:10.8px;line-height:10.8px;color:#141414;transform:scaleX(0.952)">Решение</div>
<div class="t" style="left:401.48px;top:16px;font-size:10.8px;line-height:10.8px;color:#141414;transform:scaleX(1.020)">Результаты</div>
<div class="t" style="left:1236.22px;top:13px;font-size:10.8px;line-height:10.8px;color:#a3a3a3;transform:scaleX(0.977)">Параметры</div>
<div class="t" style="left:11.62px;top:88px;font-size:10.4px;line-height:10.4px;color:#1b1b1b;transform:scaleX(0.981)">Новый</div>
<div class="t" style="left:55.60px;top:88px;font-size:10.4px;line-height:10.4px;color:#1b1b1b;transform:scaleX(1.020)">Открыть</div>
<div class="t" style="left:109.40px;top:88px;font-size:10.4px;line-height:10.4px;color:#1b1b1b;transform:scaleX(1.012)">Сохранить</div>
<div class="t" style="left:176.70px;top:88px;font-size:10.4px;line-height:10.4px;color:#8d8d8d;transform:scaleX(1.000)">Отменить</div>
<div class="t" style="left:234.96px;top:88px;font-size:10.4px;line-height:10.4px;color:#8d8d8d;transform:scaleX(1.041)">Повторить</div>
<div class="t" style="left:298.56px;top:88px;font-size:10.4px;line-height:10.4px;color:#8d8d8d;transform:scaleX(1.044)">Вырезать</div>
<div class="t" style="left:357.66px;top:88px;font-size:10.4px;line-height:10.4px;color:#8d8d8d;transform:scaleX(1.036)">Копировать</div>
<div class="t" style="left:427.58px;top:88px;font-size:10.4px;line-height:10.4px;color:#1b1b1b;transform:scaleX(1.016)">Вставить</div>
<div class="t" style="left:484.80px;top:88px;font-size:10.4px;line-height:10.4px;color:#8d8d8d;transform:scaleX(1.031)">Удалить</div>
<div class="t" style="left:540.00px;top:82px;font-size:10.4px;line-height:10.4px;color:#1b1b1b;transform:scaleX(1.021)">Запустить</div>
<div class="t" style="left:553.42px;top:94px;font-size:10.4px;line-height:10.4px;color:#1b1b1b;transform:scaleX(0.981)">МКЭ</div>
<div class="t" style="left:600.39px;top:82px;font-size:10.4px;line-height:10.4px;color:#1b1b1b;transform:scaleX(1.012)">Параметрический</div>
<div class="t" style="left:627.30px;top:94px;font-size:10.4px;line-height:10.4px;color:#1b1b1b;transform:scaleX(1.006)">анализ</div>
<div class="t" style="left:700.20px;top:82px;font-size:10.4px;line-height:10.4px;color:#1b1b1b;transform:scaleX(1.008)">Оптимизационный</div>
<div class="t" style="left:729.20px;top:94px;font-size:10.4px;line-height:10.4px;color:#1b1b1b;transform:scaleX(0.988)">анализ</div>
<div class="t" style="left:803.60px;top:82px;font-size:10.4px;line-height:10.4px;color:#1b1b1b;transform:scaleX(1.002)">Библиотека</div>
<div class="t" style="left:802.89px;top:94px;font-size:10.4px;line-height:10.4px;color:#1b1b1b;transform:scaleX(1.007)">материалов</div>
<div class="t" style="left:872.78px;top:87px;font-size:10.4px;line-height:10.4px;color:#1b1b1b;transform:scaleX(1.024)">Во весь экран</div>
<div class="t" style="left:967.70px;top:82px;font-size:10.4px;line-height:10.4px;color:#8d8d8d;transform:scaleX(1.017)">Скрыть</div>
<div class="t" style="left:956.14px;top:94px;font-size:10.4px;line-height:10.4px;color:#8d8d8d;transform:scaleX(1.057)">результаты</div>
<div class="t" style="left:491.95px;top:112px;font-size:10.4px;line-height:10.4px;color:#1b1b1b;transform:scaleX(1.047)">Главная</div>
<div class="t" style="left:9.00px;top:137px;font-size:10.6px;line-height:10.6px;color:#141414;transform:scaleX(0.987)">Дерево проекта</div>
<div class="t" style="left:12.97px;top:187px;font-size:10.6px;line-height:10.6px;color:#141414;transform:scaleX(1.033)">Поиск:</div>
<div class="t" style="left:9.00px;top:441px;font-size:10.6px;line-height:10.6px;color:#141414;transform:scaleX(0.943)">Свойства</div>
<div class="t" style="left:47.71px;top:206px;font-size:12px;line-height:12px;color:#1a1a1a;transform:scaleX(0.992);-webkit-text-stroke:0">Проект 1</div>
<div class="t" style="left:68.00px;top:224px;font-size:12px;line-height:12px;color:#1a1a1a;transform:scaleX(1.000);-webkit-text-stroke:0">Системы координат</div>
<div class="t" style="left:68.00px;top:242px;font-size:12px;line-height:12px;color:#1a1a1a;transform:scaleX(1.000);-webkit-text-stroke:0">Анализ МКЭ</div>
</body></html>
